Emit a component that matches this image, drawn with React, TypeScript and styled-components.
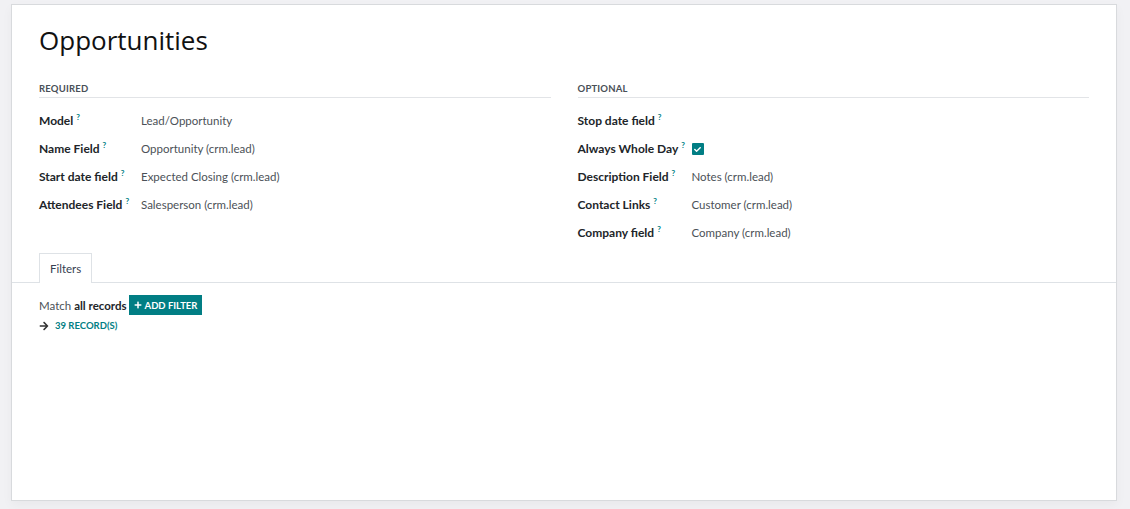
import React from 'react'
import styled, { createGlobalStyle } from 'styled-components'
import { FaArrowRight, FaPlus, FaCheck } from 'react-icons/fa'

const GlobalStyle = createGlobalStyle`
html, body {
  margin: 0;
  padding: 0;
  background: #f1f1f4;
  font-family: Lato, "Open Sans", sans-serif;
  color: #212529;
}
`

const Page = styled.div`
width: 1130px;
height: 509px;
padding: 4px 0 0 11px;
box-sizing: border-box;
`

const Sheet = styled.div`
width: 1106px;
height: 497px;
box-sizing: border-box;
background: #fff;
border: 1px solid #d8dadd;
box-shadow: 0 4px 10px rgba(0, 0, 0, 0.04);
display: flex;
flex-direction: column;
`

const SheetBody = styled.div`
padding: 16px 27px 0 27px;
`

const Title = styled.h1`
margin: 0;
font-family: "Open Sans", sans-serif;
font-size: 26px;
line-height: 38px;
font-weight: 400;
color: #111;
`

const Groups = styled.div`
display: grid;
grid-template-columns: 1fr 1fr;
column-gap: 27px;
margin-top: 23px;
`

const Group = styled.div``

const GroupHeader = styled.div`
font-size: 9.5px;
font-weight: 700;
color: #495057;
text-transform: uppercase;
letter-spacing: 0.2px;
padding-bottom: 2px;
border-bottom: 1px solid #e2e4e7;
line-height: 13px;
`

const Rows = styled.div`
margin-top: 8px;
`

const Row = styled.div<{ $labelWidth: number }>`
display: grid;
grid-template-columns: ${p => p.$labelWidth}px 1fr;
align-items: center;
height: 28px;
`

const Label = styled.div`
font-size: 12px;
font-weight: 700;
color: #212529;
white-space: nowrap;
`

const Help = styled.sup`
color: #017e84;
font-size: 8px;
font-weight: 700;
margin-left: 3px;
vertical-align: 5px;
line-height: 0;
`

const Value = styled.div`
font-size: 11.5px;
color: #4b5157;
white-space: nowrap;
`

const Checkbox = styled.span`
display: inline-flex;
align-items: center;
justify-content: center;
width: 12px;
height: 12px;
background: #017e84;
border-radius: 1px;
color: #fff;
vertical-align: middle;
`

const TabBar = styled.div`
display: flex;
padding: 0 27px;
margin-top: 7px;
border-bottom: 1px solid #dee2e6;
`

const Tab = styled.div`
height: 28px;
padding: 0 10px;
display: flex;
align-items: center;
font-size: 11.5px;
color: #374151;
border: 1px solid #dee2e6;
border-bottom: none;
background: #fff;
margin-bottom: -1px;
padding-bottom: 1px;
`

const TabContent = styled.div`
padding: 12px 27px 0 27px;
`

const MatchLine = styled.div`
display: flex;
align-items: center;
font-size: 11.5px;
color: #4b5157;
`

const Strong = styled.b`
font-weight: 700;
color: #212529;
margin-left: 3px;
`

const AddButton = styled.button`
margin-left: 2px;
height: 20px;
padding: 0 5px;
display: inline-flex;
align-items: center;
gap: 3px;
border: none;
border-radius: 0;
background: #017e84;
color: #fff;
font-family: inherit;
font-size: 9.5px;
font-weight: 700;
text-transform: uppercase;
cursor: pointer;
`

const RecordsLink = styled.div`
display: flex;
align-items: center;
gap: 6px;
margin-top: 3px;
font-size: 9.5px;
font-weight: 700;
color: #017e84;
line-height: 16px;
`

const ArrowWrap = styled.span`
color: #333;
display: inline-flex;
`

type Field = { label: string, value?: React.ReactNode }

const required: Field[] = [
  { label: 'Model', value: 'Lead/Opportunity' },
  { label: 'Name Field', value: 'Opportunity (crm.lead)' },
  { label: 'Start date field', value: 'Expected Closing (crm.lead)' },
  { label: 'Attendees Field', value: 'Salesperson (crm.lead)' },
]

const optional: Field[] = [
  { label: 'Stop date field' },
  { label: 'Always Whole Day', value: <Checkbox><FaCheck size={7} /></Checkbox> },
  { label: 'Description Field', value: 'Notes (crm.lead)' },
  { label: 'Contact Links', value: 'Customer (crm.lead)' },
  { label: 'Company field', value: 'Company (crm.lead)' },
]

const FieldGroup: React.FC<{ title: string, fields: Field[], labelWidth: number }> = ({ title, fields, labelWidth }) =>
  <Group>
    <GroupHeader>{title}</GroupHeader>
    <Rows>
      {fields.map(f =>
        <Row key={f.label} $labelWidth={labelWidth}>
          <Label>{f.label}<Help>?</Help></Label>
          <Value>{f.value}</Value>
        </Row>
      )}
    </Rows>
  </Group>

export default function App() {
  return <Page>
    <GlobalStyle />
    <Sheet>
      <SheetBody>
        <Title>Opportunities</Title>
        <Groups>
          <FieldGroup title='Required' fields={required} labelWidth={102} />
          <FieldGroup title='Optional' fields={optional} labelWidth={114} />
        </Groups>
      </SheetBody>

      <TabBar>
        <Tab>Filters</Tab>
      </TabBar>

      <TabContent>
        <MatchLine>
          Match<Strong>all records</Strong>
          <AddButton><FaPlus size={8} />Add Filter</AddButton>
        </MatchLine>
        <RecordsLink>
          <ArrowWrap><FaArrowRight size={10} /></ArrowWrap>
          39 RECORD(S)
        </RecordsLink>
      </TabContent>
    </Sheet>
  </Page>
}
